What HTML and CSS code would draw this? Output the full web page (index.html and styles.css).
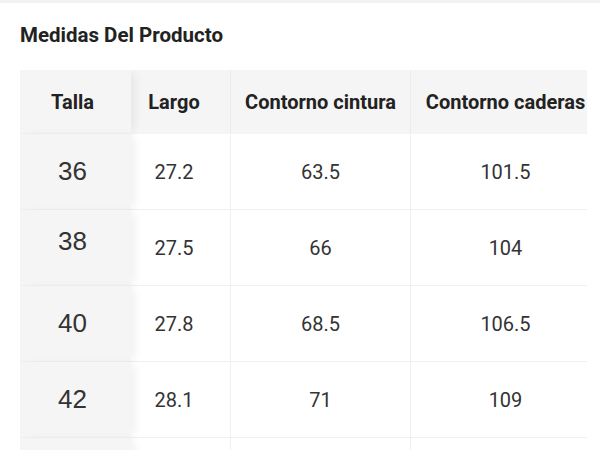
FILE: index.html
```html
<!DOCTYPE html>
<html lang="es">
<head>
<meta charset="utf-8">
<title>Medidas Del Producto</title>
<link rel="stylesheet" href="styles.css">
</head>
<body>
<div class="topbar"></div>
<section class="sizes">
  <h2 class="title">Medidas Del Producto</h2>
  <div class="table-wrap">
    <div class="table">
      <div class="cell head first">Talla</div>
      <div class="cell head c2">Largo</div>
      <div class="cell head">Contorno cintura</div>
      <div class="cell head">Contorno caderas</div>

      <div class="cell first size">36</div>
      <div class="cell c2">27.2</div>
      <div class="cell">63.5</div>
      <div class="cell">101.5</div>

      <div class="cell first size up">38</div>
      <div class="cell c2">27.5</div>
      <div class="cell">66</div>
      <div class="cell">104</div>

      <div class="cell first size">40</div>
      <div class="cell c2">27.8</div>
      <div class="cell">68.5</div>
      <div class="cell">106.5</div>

      <div class="cell first size">42</div>
      <div class="cell c2">28.1</div>
      <div class="cell">71</div>
      <div class="cell">109</div>

      <div class="cell first size"></div>
      <div class="cell c2"></div>
      <div class="cell"></div>
      <div class="cell"></div>
    </div>
  </div>
</section>
</body>
</html>
```
FILE: styles.css
```css
html, body {
  margin: 0;
  padding: 0;
  background: #ffffff;
  overflow: hidden;
}
body {
  font-family: Roboto, "Liberation Sans", sans-serif;
  color: #333;
  width: 600px;
  height: 450px;
}
.topbar {
  height: 3px;
  background: #f2f2f2;
}
.sizes {
  padding: 0 0 0 20px;
}
.title {
  margin: 0;
  padding: 20px 0 0 0;
  font-size: 20.5px;
  line-height: 24px;
  font-weight: 700;
  color: #222;
}
.table-wrap {
  margin-top: 23px;
  width: 567px;
  overflow: hidden;
}
.table {
  display: grid;
  grid-template-columns: 111px 99px 180px 190px;
  grid-auto-rows: 76px;
  grid-template-rows: 64px;
}
.cell {
  display: flex;
  align-items: center;
  justify-content: center;
  font-size: 20px;
  color: #333;
  border-bottom: 1px solid #f0f0f0;
  border-left: 1px solid #f0f0f0;
  background: #fff;
}
.cell.head {
  background: #f5f5f5;
  font-weight: 700;
  color: #222;
  border-bottom: none;
  border-left: 1px solid #ececec;
}
.cell.c2 {
  justify-content: center;
  padding-right: 13px;
  border-left: none;
}
.cell.first {
  position: relative;
  z-index: 1;
  background: #f5f5f5;
  border-left: none;
  border-bottom: 1px solid #efefef;
  box-shadow: 6px 0 10px -3px rgba(0, 0, 0, 0.07);
  padding-right: 6px;
}
.cell.size {
  font-family: "Liberation Sans", Arial, sans-serif;
  font-size: 26px;
  color: #333;
}
.cell.size.up {
  align-items: flex-start;
  padding-top: 16px;
}
```
